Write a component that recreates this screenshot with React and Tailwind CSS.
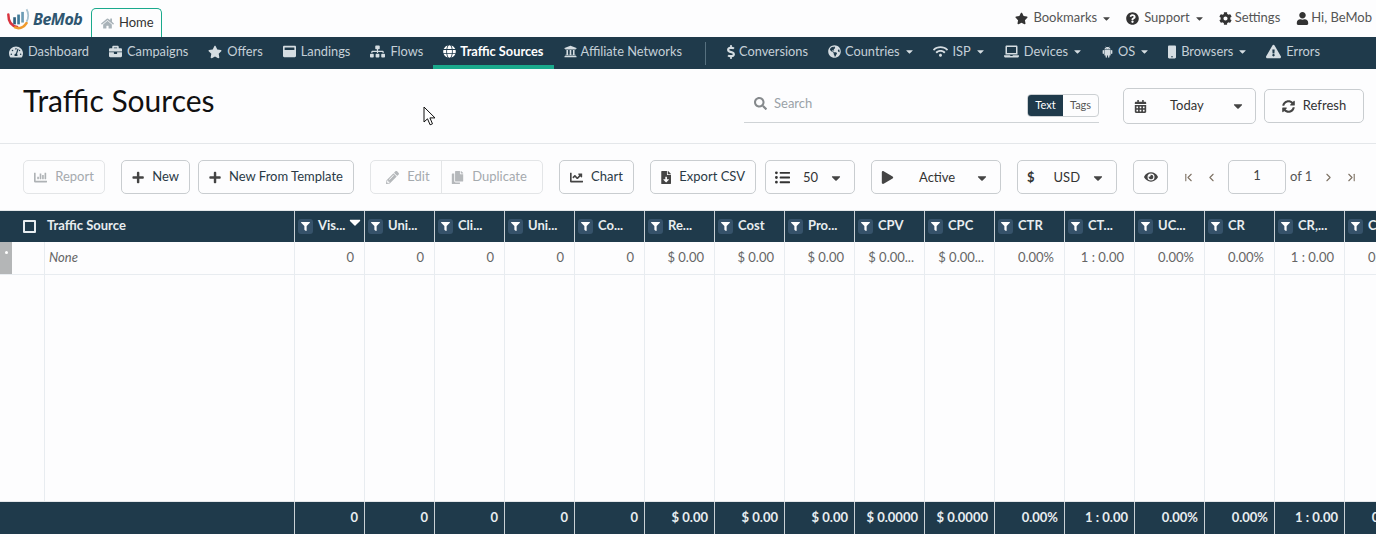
import {
  FaTachometerAlt, FaBriefcase, FaStar, FaWindowMaximize, FaSitemap, FaGlobe, FaUniversity, FaDollarSign,
  FaGlobeAmericas, FaWifi, FaLaptop, FaMobile, FaExclamationTriangle, FaHome, FaQuestionCircle,
  FaCog, FaUser, FaSearch, FaCalendarAlt, FaSyncAlt, FaChartBar, FaPlus, FaPencilAlt, FaCopy, FaChartLine,
  FaFileDownload, FaListUl, FaPlay, FaEye, FaFilter, FaCaretDown,
} from 'react-icons/fa'
import { AiFillAndroid } from 'react-icons/ai'
import { ChevronFirst, ChevronLeft, ChevronRight, ChevronLast } from 'lucide-react'

const navLeft = [
  { icon: FaTachometerAlt, label: 'Dashboard', slot: 'w-[19px]', size: 'w-[14px] h-[14px]' },
  { icon: FaBriefcase, label: 'Campaigns', slot: 'w-[18px]', size: 'w-[13px] h-[13px]' },
  { icon: FaStar, label: 'Offers', slot: 'w-[19px]', size: 'w-[14px] h-[14px]' },
  { icon: FaWindowMaximize, label: 'Landings', slot: 'w-[18px]', size: 'w-[13px] h-[13px]' },
  { icon: FaSitemap, label: 'Flows', slot: 'w-[20px]', size: 'w-[15px] h-[15px]' },
  { icon: FaGlobe, label: 'Traffic Sources', slot: 'w-[17px]', size: 'w-[13px] h-[13px]', active: true },
  { icon: FaUniversity, label: 'Affiliate Networks', slot: 'w-[17px]', size: 'w-[13px] h-[13px]' },
]

const navRight = [
  { icon: FaDollarSign, label: 'Conversions', slot: 'w-[12px]', size: 'w-[8px] h-[14px]' },
  { icon: FaGlobeAmericas, label: 'Countries', slot: 'w-[17px]', size: 'w-[13px] h-[13px]', caret: true },
  { icon: FaWifi, label: 'ISP', slot: 'w-[20px]', size: 'w-[15px] h-[15px]', caret: true },
  { icon: FaLaptop, label: 'Devices', slot: 'w-[20px]', size: 'w-[15px] h-[15px]', caret: true },
  { icon: AiFillAndroid, label: 'OS', slot: 'w-[17px]', size: 'w-[13px] h-[14px]', caret: true },
  { icon: FaMobile, label: 'Browsers', slot: 'w-[13px]', size: 'w-[8px] h-[14px]', caret: true },
  { icon: FaExclamationTriangle, label: 'Errors', slot: 'w-[20px]', size: 'w-[15px] h-[15px]' },
]

const columns = [
  { head: 'Vis...', value: '0', total: '0', sorted: true },
  { head: 'Uni...', value: '0', total: '0' },
  { head: 'Cli...', value: '0', total: '0' },
  { head: 'Uni...', value: '0', total: '0' },
  { head: 'Co...', value: '0', total: '0' },
  { head: 'Re...', value: '$ 0.00', total: '$ 0.00' },
  { head: 'Cost', value: '$ 0.00', total: '$ 0.00' },
  { head: 'Pro...', value: '$ 0.00', total: '$ 0.00' },
  { head: 'CPV', value: '$ 0.00...', total: '$ 0.0000' },
  { head: 'CPC', value: '$ 0.00...', total: '$ 0.0000' },
  { head: 'CTR', value: '0.00%', total: '0.00%' },
  { head: 'CT...', value: '1 : 0.00', total: '1 : 0.00' },
  { head: 'UC...', value: '0.00%', total: '0.00%' },
  { head: 'CR', value: '0.00%', total: '0.00%' },
  { head: 'CR,...', value: '1 : 0.00', total: '1 : 0.00' },
  { head: 'CV', value: '0.00%', total: '0.00%' },
]

function Logo() {
  return (
    <div className="flex items-center ml-[7px] w-[84px]">
      <svg width="24" height="22" viewBox="0 0 27 24" className="shrink-0">
        <path d="M1.5 7c0 8 4 13 10 14" fill="none" stroke="#d9343f" strokeWidth="2.8" strokeLinecap="round" />
        <path d="M9 21.5c5 2 10 0 13-5" fill="none" stroke="#ef9a2d" strokeWidth="2.8" strokeLinecap="round" />
        <rect x="7" y="10" width="3" height="8" fill="#2f5f7d" />
        <rect x="11.5" y="7" width="3" height="11" fill="#3f7a99" />
        <rect x="16" y="4" width="3" height="12" fill="#6d9cb5" />
        <path d="M22 1c2.500 4 2.500 10 0 14" fill="none" stroke="#a9c3d1" strokeWidth="2" />
      </svg>
      <span className="ml-[2px] text-[16px] leading-none font-bold italic text-[#2f5670] font-['Open_Sans',sans-serif] tracking-[-0.5px]">BeMob</span>
    </div>
  )
}

function NavItem({ item }) {
  const Icon = item.icon
  return (
    <div className={`h-[32px] px-[10px] flex items-center border-b-[4px] pt-[1px] ${item.active ? 'border-[#1aa98c] text-white font-bold' : 'border-transparent text-[#c5d0d8]'}`}>
      <span className={`${item.slot} shrink-0`}>
        <Icon className={`${item.size} ${item.active ? 'text-white' : 'text-[#d5dde2]'}`} />
      </span>
      <span className="whitespace-nowrap">{item.label}</span>
      {item.caret && <FaCaretDown className="text-[11px] ml-[4px] -mr-[2px] text-[#d5dde2]" />}
    </div>
  )
}

function TopLink({ icon: Icon, label, caret, slot }) {
  return (
    <div className="flex items-center whitespace-nowrap">
      <span className={`${slot} shrink-0`}>
        <Icon className="text-[13px] text-[#333]" />
      </span>
      <span>{label}</span>
      {caret && <FaCaretDown className="text-[11px] text-[#444] ml-[4px] -mr-[2px]" />}
    </div>
  )
}

function Btn({ icon: Icon, label, className = '' }) {
  return (
    <button className={`h-[34px] px-[10px] flex items-center justify-center gap-[8px] border border-[#c9cdd0] rounded-[5px] text-[13px] text-[#2a3a46] whitespace-nowrap ${className}`}>
      <Icon className="text-[13px] text-[#444]" />
      {label}
    </button>
  )
}

function Select({ left, label, className = '', labelClass = '' }) {
  return (
    <div className={`h-[34px] px-[9px] pt-[1px] flex items-center border border-[#c9cdd0] rounded-[5px] text-[13px] text-[#333] ${className}`}>
      {left}
      <span className={labelClass}>{label}</span>
      <FaCaretDown className="ml-auto mr-[2px] text-[14px] text-[#444]" />
    </div>
  )
}

function Cells({ render, className = '' }) {
  return columns.map((c, i) => (
    <div key={i} className={`w-[70px] shrink-0 border-l pl-[3px] flex items-center whitespace-nowrap overflow-hidden ${className}`}>
      {render(c)}
    </div>
  ))
}

export default function App() {
  return (
    <div className="relative h-[537px] w-[1376px] overflow-hidden bg-[#fdfdfe] font-['Lato',sans-serif]">
      {/* top strip */}
      <div className="h-[37px] flex items-center">
        <Logo />
        <div className="mt-[8px] h-[29px] w-[71px] flex items-center gap-[5px] pl-[9px] border border-b-0 border-[#1aa98c] rounded-t-[5px] text-[13px] text-[#333]">
          <FaHome className="text-[13px] text-[#a9b3b9]" />
          Home
        </div>
        <div className="ml-auto pr-[4px] flex items-center gap-[16px] text-[13px] text-[#555] -mt-[1px]">
          <TopLink icon={FaStar} label="Bookmarks" caret slot="w-[18px]" />
          <TopLink icon={FaQuestionCircle} label="Support" caret slot="w-[18px]" />
          <TopLink icon={FaCog} label="Settings" slot="w-[16px]" />
          <TopLink icon={FaUser} label="Hi, BeMob" slot="w-[15px]" />
        </div>
      </div>

      {/* main nav */}
      <div className="h-[32px] bg-[#1f3a4b] flex items-center text-[12.8px] -ml-px">
        {navLeft.map(n => <NavItem key={n.label} item={n} />)}
        <div className="w-px h-[23px] bg-[#56707f] ml-[13px] mr-[11px]" />
        {navRight.map(n => <NavItem key={n.label} item={n} />)}
      </div>

      {/* title row */}
      <div className="h-[75px] flex items-center border-b border-[#e4e7ea] pl-[23px] pr-[12px]">
        <h1 className="text-[30px] text-[#111] leading-none -mt-[12px]">Traffic Sources</h1>
        <div className="ml-auto w-[355px] h-[37px] -mt-[4px] pl-[10px] flex items-center border-b border-[#cfd3d6] text-[13px] text-[#9aa2a8]">
          <FaSearch className="text-[13px] text-[#85898c] mr-[7px]" />
          Search
          <div className="ml-auto mt-[3px] flex h-[23px] w-[72px] rounded-[4px] border border-[#ccd0d3] text-[11px] overflow-hidden">
            <span className="w-[35px] bg-[#1f3a4b] text-white flex items-center justify-center">Text</span>
            <span className="flex-1 text-[#555] flex items-center justify-center">Tags</span>
          </div>
        </div>
        <div className="ml-[24px] w-[133px] h-[36px] px-[10px] flex items-center border border-[#c9cdd0] rounded-[5px] text-[13px] text-[#333]">
          <FaCalendarAlt className="text-[13px] text-[#444]" />
          <span className="ml-[23px]">Today</span>
          <FaCaretDown className="ml-auto text-[14px] text-[#444]" />
        </div>
        <div className="ml-[8px] w-[100px] h-[34px] flex items-center justify-center gap-[8px] border border-[#c9cdd0] rounded-[5px] text-[13px] text-[#333]">
          <FaSyncAlt className="text-[13px] text-[#444]" />
          Refresh
        </div>
      </div>

      {/* toolbar */}
      <div className="h-[66px] flex items-center pl-[23px]">
        <Btn icon={FaChartBar} label="Report" className="w-[82px] border-[#e3e5e7] text-[#a5aaae] [&_svg]:text-[#aeb2b5]" />
        <Btn icon={FaPlus} label="New" className="w-[69px] ml-[16px]" />
        <Btn icon={FaPlus} label="New From Template" className="w-[156px] ml-[8px]" />
        <div className="ml-[16px] w-[173px] h-[34px] flex border border-[#e3e5e7] rounded-[5px] text-[13px] text-[#a5aaae]">
          <div className="w-[71px] pl-[4px] flex items-center justify-center gap-[8px] border-r border-[#e3e5e7]">
            <FaPencilAlt className="text-[13px] text-[#b5b8bb]" />
            Edit
          </div>
          <div className="flex-1 pr-[6px] flex items-center justify-center gap-[8px]">
            <FaCopy className="text-[13px] text-[#b5b8bb]" />
            Duplicate
          </div>
        </div>
        <Btn icon={FaChartLine} label="Chart" className="w-[75px] ml-[16px]" />
        <Btn icon={FaFileDownload} label="Export CSV" className="w-[106px] ml-[16px]" />
        <Select left={<FaListUl className="text-[15px] text-[#333]" />} label="50" labelClass="ml-[13px]" className="w-[90px] ml-[9px]" />
        <Select left={<FaPlay className="text-[13px] text-[#444]" />} label="Active" labelClass="ml-[25px]" className="w-[130px] ml-[16px]" />
        <Select left={<span className="font-bold text-[#333]">$</span>} label="USD" labelClass="ml-[19px]" className="w-[100px] ml-[16px]" />
        <div className="ml-[16px] w-[35px] h-[34px] flex items-center justify-center border border-[#c9cdd0] rounded-[5px]">
          <FaEye className="text-[14px] text-[#444]" />
        </div>
        <ChevronFirst size={13} className="ml-[14px] text-[#7d7163]" />
        <ChevronLeft size={13} className="ml-[10px] text-[#7d7163]" />
        <div className="ml-[10px] w-[58px] h-[34px] flex items-center justify-center border border-[#c9cdd0] rounded-[5px] text-[13px] text-[#444] pb-[2px]">1</div>
        <span className="ml-[4px] text-[13px] text-[#555] whitespace-nowrap">of 1</span>
        <ChevronRight size={13} className="ml-[10px] text-[#7d7163]" />
        <ChevronLast size={13} className="ml-[10px] text-[#7d7163]" />
      </div>

      {/* table head */}
      <div className="h-[32px] bg-[#1f3a4b] flex text-[13px] font-bold text-[#e8edf0] border-t border-[#e4e7ea]">
        <div className="w-[294px] shrink-0 flex items-center pl-[23px] pb-[1px] gap-[11px]">
          <span className="w-[13px] h-[13px] border-2 border-[#e8edf0] rounded-[1px]" />
          Traffic Source
        </div>
        <Cells
          className="border-[#c9d0d5] relative pb-[1px]"
          render={c => (
            <>
              <span className="w-[15px] h-[15px] mr-[5px] rounded-[3px] bg-[#36526a] flex items-center justify-center shrink-0">
                <FaFilter className="text-[9px] text-white" />
              </span>
              {c.head}
              {c.sorted && <FaCaretDown className="absolute right-[0px] top-[2px] text-[18px] text-white" />}
            </>
          )}
        />
      </div>

      {/* row */}
      <div className="h-[33px] flex text-[13px] text-[#666] border-b border-[#e8ecf0]">
        <div className="w-[44px] shrink-0 flex">
          <span className="w-[12px] h-[32px] bg-[#b4b6b7] flex justify-center pt-[9px]">
            <span className="w-[3px] h-[3px] rounded-full bg-white" />
          </span>
        </div>
        <div className="w-[250px] shrink-0 border-l border-[#e8ecf0] pl-[4px] flex items-center italic">None</div>
        <Cells className="border-[#e8ecf0] justify-end pr-[10px]" render={c => c.value} />
      </div>

      {/* empty body keeps the column rules */}
      <div className="h-[226px] flex">
        <div className="w-[44px] shrink-0" />
        <div className="w-[250px] shrink-0 border-l border-[#e8ecf0]" />
        <Cells className="border-[#e8ecf0]" render={() => null} />
      </div>

      {/* totals */}
      <div className="h-[33px] bg-[#1f3a4b] flex text-[13px] font-bold text-[#e8edf0] border-t border-[#e4e7ea]">
        <div className="w-[294px] shrink-0" />
        <Cells className="border-[#c9d0d5] justify-end pr-[6px]" render={c => c.total} />
      </div>

      {/* mouse pointer caught in the shot */}
      <svg width="14" height="20" viewBox="0 0 14 20" className="absolute left-[423px] top-[106px]">
        <path d="M1 1v15l3.500-3.200 2.600 6 2.400-1-2.600-5.900H12z" fill="#fff" stroke="#111" strokeWidth="1" />
      </svg>
    </div>
  )
}
